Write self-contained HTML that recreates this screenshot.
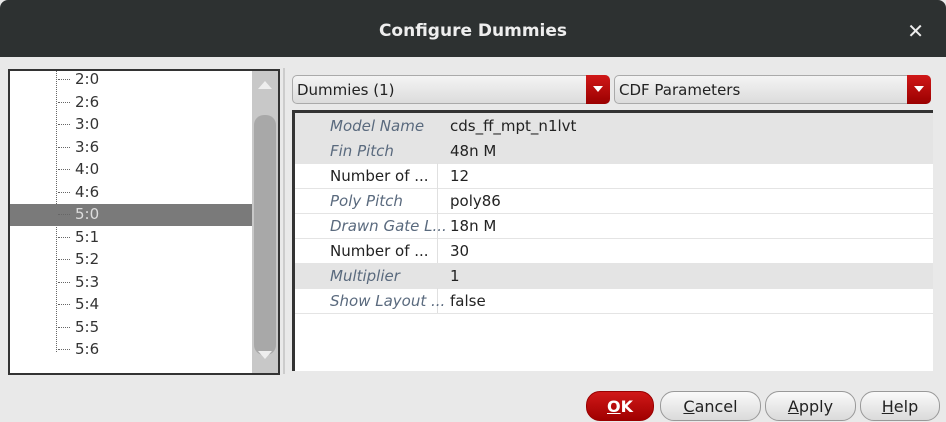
<!DOCTYPE html><html><head><style>
body{margin:0;width:946px;height:420px;background:#e9e9e9;font-family:"DejaVu Sans","Liberation Sans",sans-serif;position:relative;overflow:hidden}
.a{position:absolute}
.title{left:0;top:0;width:946px;height:57px;background:#2d3131;border-radius:8px 8px 0 0;color:#eee;font-size:17px;font-weight:600;text-align:center;line-height:62px}
.tree{left:8px;top:69px;width:268px;height:302px;border:2px solid #333;background:#fff}
.it{position:absolute;left:66px;font-size:15px;color:#333;height:22px;line-height:22px}
.dot{position:absolute;left:48px;width:12px;border-top:1px dotted #666}
.dd{border:1px solid #aaa;border-radius:5px;background:linear-gradient(#f4f4f4,#dcdcdc);height:29px;font-size:15px;line-height:29px;padding-left:4px;color:#222;box-sizing:border-box}
.arr{position:absolute;right:-1px;top:-1px;width:24px;height:29px;background:linear-gradient(#d01818,#9a0000);border-radius:0 5px 5px 0}
.arr:after{content:"";position:absolute;left:7px;top:11px;border-left:5px solid transparent;border-right:5px solid transparent;border-top:6px solid #fff}
.tbl{left:292px;top:110px;width:638px;height:258px;background:#fff;border-top:3px solid #333;border-left:3px solid #333}
.r{position:absolute;left:0;width:638px;height:25px;border-bottom:1px solid #e4e4e4;font-size:15px;line-height:26px}
.r .n{position:absolute;left:35px;color:#555}
.r .n.i{font-style:italic;color:#5a6a7e}
.r .v{position:absolute;left:155px;color:#222}
.r .sep{position:absolute;left:142px;top:0;height:25px;border-left:1px solid #e0e0e0}
.btn{top:391px;height:30px;border:1px solid #999;border-radius:14px;background:linear-gradient(#fafafa,#dadada);font-size:16px;text-align:center;line-height:30px;color:#222;box-sizing:border-box}
</style></head><body>
<div class="a title">Configure Dummies<span style="position:absolute;right:22px;font-size:20px">✕</span></div>
<div class="a tree">
<div class="a" style="left:46px;top:0;height:281px;border-left:1px dotted #666"></div>
<div class="a" style="left:0;top:133px;width:242px;height:22px;background:#7a7a7a"></div>
<div class="a" style="left:242px;top:0;width:26px;height:302px;background:#c8c8c8"></div>
<div class="a" style="left:244px;top:44px;width:22px;height:240px;background:#a8a8a8;border-radius:10px"></div>
<div class="a" style="left:248px;top:10px;border-left:7px solid transparent;border-right:7px solid transparent;border-bottom:8px solid #eee"></div>
<div class="a" style="left:248px;top:280px;border-left:7px solid transparent;border-right:7px solid transparent;border-top:8px solid #eee"></div>
</div>
<div id="items"></div>
<div class="a" style="left:283px;top:68px;width:2px;height:306px;background:#ccc"></div>
<div class="a dd" style="left:292px;top:75px;width:318px">Dummies (1)<span class="arr"></span></div>
<div class="a dd" style="left:614px;top:75px;width:317px">CDF Parameters<span class="arr"></span></div>
<div class="a tbl">
<div class="r" style="top:0;background:#e4e4e4"><span class="n i">Model Name</span><span class="v">cds_ff_mpt_n1lvt</span></div>
<div class="r" style="top:25px;background:#e4e4e4"><span class="n i">Fin Pitch</span><span class="v">48n M</span></div>
<div class="r" style="top:50px"><span class="sep"></span><span class="n" style="color:#222">Number of ...</span><span class="v">12</span></div>
<div class="r" style="top:75px"><span class="sep"></span><span class="n i">Poly Pitch</span><span class="v">poly86</span></div>
<div class="r" style="top:100px"><span class="sep"></span><span class="n i">Drawn Gate L...</span><span class="v">18n M</span></div>
<div class="r" style="top:125px"><span class="sep"></span><span class="n" style="color:#222">Number of ...</span><span class="v">30</span></div>
<div class="r" style="top:150px;background:#e4e4e4"><span class="n i">Multiplier</span><span class="v">1</span></div>
<div class="r" style="top:175px"><span class="sep"></span><span class="n i">Show Layout ...</span><span class="v">false</span></div>
</div>
<div class="a btn" style="left:586px;width:68px;background:linear-gradient(#d01818,#a00000);border-color:#900;color:#fff;font-weight:bold"><u>O</u>K</div>
<div class="a btn" style="left:660px;width:101px"><u>C</u>ancel</div>
<div class="a btn" style="left:765px;width:91px"><u>A</u>pply</div>
<div class="a btn" style="left:860px;width:80px"><u>H</u>elp</div>
<script>
var l=["2:0","2:6","3:0","3:6","4:0","4:6","5:0","5:1","5:2","5:3","5:4","5:5","5:6"],h="";
l.forEach(function(t,i){var y=68+i*22.5;h+='<div class="dot" style="top:'+(y+11)+'px;left:58px"></div><div class="it" style="top:'+y+'px;left:75px;'+(i==6?'color:#ddd':'')+'">'+t+'</div>';});
document.getElementById("items").innerHTML=h;
</script>
</body></html>
